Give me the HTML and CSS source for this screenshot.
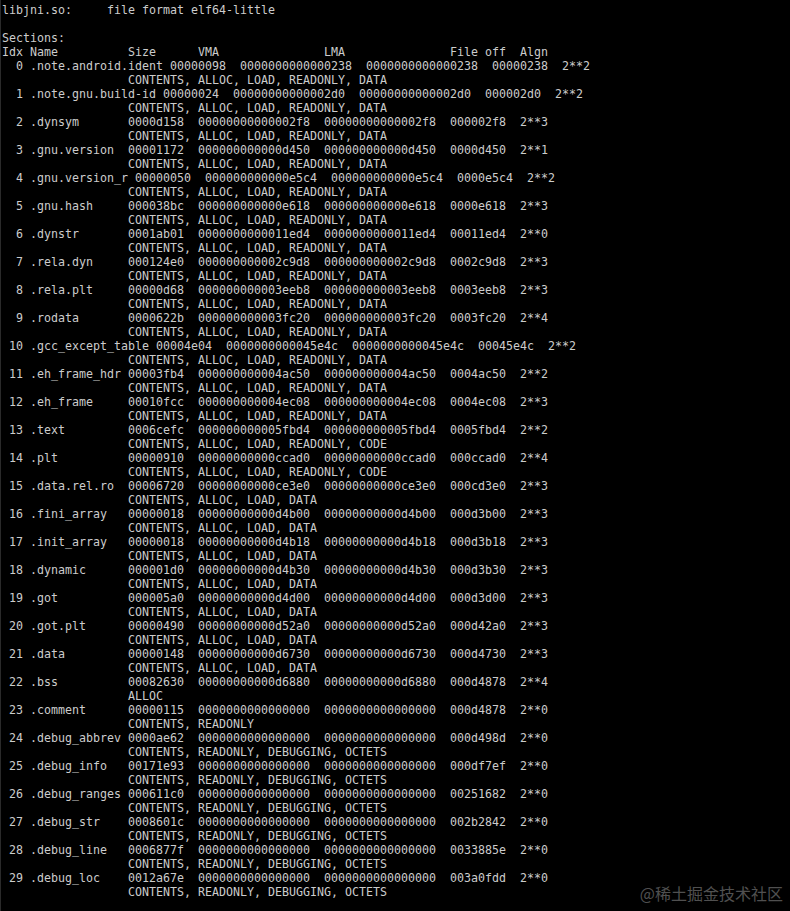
FILE: index.html
```html
<!DOCTYPE html>
<html lang="en">
<head>
<meta charset="utf-8">
<title>objdump -h libjni.so</title>
<link rel="stylesheet" href="styles.css">
</head>
<body>
<main class="terminal">
<pre class="output">libjni.so:     file format elf64-little

Sections:
Idx Name          Size      VMA               LMA               File off  Algn
  0 .note.android.ident 00000098  0000000000000238  0000000000000238  00000238  2**2
                  CONTENTS, ALLOC, LOAD, READONLY, DATA
  1 .note.gnu.build-id 00000024  00000000000002d0  00000000000002d0  000002d0  2**2
                  CONTENTS, ALLOC, LOAD, READONLY, DATA
  2 .dynsym       0000d158  00000000000002f8  00000000000002f8  000002f8  2**3
                  CONTENTS, ALLOC, LOAD, READONLY, DATA
  3 .gnu.version  00001172  000000000000d450  000000000000d450  0000d450  2**1
                  CONTENTS, ALLOC, LOAD, READONLY, DATA
  4 .gnu.version_r 00000050  000000000000e5c4  000000000000e5c4  0000e5c4  2**2
                  CONTENTS, ALLOC, LOAD, READONLY, DATA
  5 .gnu.hash     000038bc  000000000000e618  000000000000e618  0000e618  2**3
                  CONTENTS, ALLOC, LOAD, READONLY, DATA
  6 .dynstr       0001ab01  0000000000011ed4  0000000000011ed4  00011ed4  2**0
                  CONTENTS, ALLOC, LOAD, READONLY, DATA
  7 .rela.dyn     000124e0  000000000002c9d8  000000000002c9d8  0002c9d8  2**3
                  CONTENTS, ALLOC, LOAD, READONLY, DATA
  8 .rela.plt     00000d68  000000000003eeb8  000000000003eeb8  0003eeb8  2**3
                  CONTENTS, ALLOC, LOAD, READONLY, DATA
  9 .rodata       0000622b  000000000003fc20  000000000003fc20  0003fc20  2**4
                  CONTENTS, ALLOC, LOAD, READONLY, DATA
 10 .gcc_except_table 00004e04  0000000000045e4c  0000000000045e4c  00045e4c  2**2
                  CONTENTS, ALLOC, LOAD, READONLY, DATA
 11 .eh_frame_hdr 00003fb4  000000000004ac50  000000000004ac50  0004ac50  2**2
                  CONTENTS, ALLOC, LOAD, READONLY, DATA
 12 .eh_frame     00010fcc  000000000004ec08  000000000004ec08  0004ec08  2**3
                  CONTENTS, ALLOC, LOAD, READONLY, DATA
 13 .text         0006cefc  000000000005fbd4  000000000005fbd4  0005fbd4  2**2
                  CONTENTS, ALLOC, LOAD, READONLY, CODE
 14 .plt          00000910  00000000000ccad0  00000000000ccad0  000ccad0  2**4
                  CONTENTS, ALLOC, LOAD, READONLY, CODE
 15 .data.rel.ro  00006720  00000000000ce3e0  00000000000ce3e0  000cd3e0  2**3
                  CONTENTS, ALLOC, LOAD, DATA
 16 .fini_array   00000018  00000000000d4b00  00000000000d4b00  000d3b00  2**3
                  CONTENTS, ALLOC, LOAD, DATA
 17 .init_array   00000018  00000000000d4b18  00000000000d4b18  000d3b18  2**3
                  CONTENTS, ALLOC, LOAD, DATA
 18 .dynamic      000001d0  00000000000d4b30  00000000000d4b30  000d3b30  2**3
                  CONTENTS, ALLOC, LOAD, DATA
 19 .got          000005a0  00000000000d4d00  00000000000d4d00  000d3d00  2**3
                  CONTENTS, ALLOC, LOAD, DATA
 20 .got.plt      00000490  00000000000d52a0  00000000000d52a0  000d42a0  2**3
                  CONTENTS, ALLOC, LOAD, DATA
 21 .data         00000148  00000000000d6730  00000000000d6730  000d4730  2**3
                  CONTENTS, ALLOC, LOAD, DATA
 22 .bss          00082630  00000000000d6880  00000000000d6880  000d4878  2**4
                  ALLOC
 23 .comment      00000115  0000000000000000  0000000000000000  000d4878  2**0
                  CONTENTS, READONLY
 24 .debug_abbrev 0000ae62  0000000000000000  0000000000000000  000d498d  2**0
                  CONTENTS, READONLY, DEBUGGING, OCTETS
 25 .debug_info   00171e93  0000000000000000  0000000000000000  000df7ef  2**0
                  CONTENTS, READONLY, DEBUGGING, OCTETS
 26 .debug_ranges 000611c0  0000000000000000  0000000000000000  00251682  2**0
                  CONTENTS, READONLY, DEBUGGING, OCTETS
 27 .debug_str    0008601c  0000000000000000  0000000000000000  002b2842  2**0
                  CONTENTS, READONLY, DEBUGGING, OCTETS
 28 .debug_line   0006877f  0000000000000000  0000000000000000  0033885e  2**0
                  CONTENTS, READONLY, DEBUGGING, OCTETS
 29 .debug_loc    0012a67e  0000000000000000  0000000000000000  003a0fdd  2**0
                  CONTENTS, READONLY, DEBUGGING, OCTETS</pre>
<div class="watermark">@稀土掘金技术社区</div>
</main>
</body>
</html>
```

FILE: styles.css
```css
html, body {
  margin: 0;
  padding: 0;
  background: #000;
  height: 100%;
}

.terminal {
  position: relative;
  min-height: 911px;
  background: #000;
  border-left: 1px solid #2a2a2a;
  box-sizing: border-box;
  overflow: hidden;
}

.output {
  margin: 0;
  padding: 3px 0 0 1px;
  font-family: "DejaVu Sans Mono", "Liberation Mono", monospace;
  font-size: 11.63px;
  line-height: 14px;
  color: #cccccc;
  white-space: pre;
}

.watermark {
  position: absolute;
  right: 7px;
  bottom: 8px;
  font-family: "Noto Sans CJK SC", "Noto Sans", sans-serif;
  font-size: 16px;
  line-height: 20px;
  color: rgba(160, 160, 160, 0.5);
}
```
